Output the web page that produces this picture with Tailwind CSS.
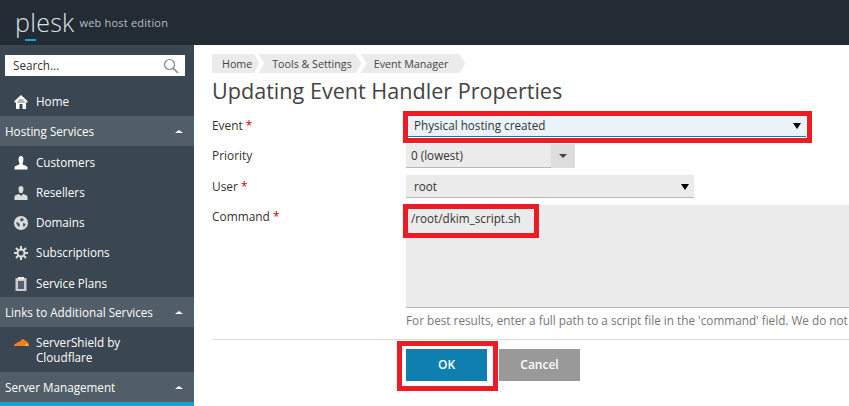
<!DOCTYPE html>
<html lang="en">
<head>
  <meta charset="UTF-8" />
  <meta name="viewport" content="width=device-width, initial-scale=1" />
  <title>Updating Event Handler Properties</title>
  <script src="https://cdn.jsdelivr.net/npm/@tailwindcss/browser@4"></script>
</head>

<body class="relative h-[406px] w-[849px] overflow-hidden bg-white font-['Open_Sans',sans-serif] text-[11.7px] text-[#333]">

  <!-- Header -->
  <header class="flex h-[45px] items-center bg-[#232b35] pl-[15px]">
    <div class="relative text-[25px] font-light leading-none tracking-[0.3px] text-[#dfe2e5]">
      plesk
      <span class="absolute left-[10px] top-[29px] h-[2px] w-[11px] bg-[#12a5d6]"></span>
    </div>
    <span class="ml-[5px] mt-[1px] text-[11px] tracking-[0.2px] text-[#b9bec3]">web host edition</span>
  </header>

  <div class="flex h-[361px]">
    <!-- Sidebar -->
    <aside class="flex w-[194px] shrink-0 flex-col bg-[#3a4651] text-[11.7px] text-white">
      <div class="px-[5px] pt-[10px]">
        <div class="flex h-[21px] w-[180px] items-center justify-between bg-white pl-2 pr-1 text-[#333]">
          <span class="pt-[1px]">Search...</span>
          <svg class="mr-[2px] h-[16px] w-[16px]" viewBox="0 0 16 16" fill="none" stroke="#888" stroke-width="1.2"><circle cx="6.5" cy="6.5" r="5"/><path d="M10 10l5 5" stroke-width="1.6"/></svg>
        </div>
      </div>

      <a class="flex h-[40px] items-center pl-[14px] pt-[12px]">
        <svg class="mr-[8px] h-[14px] w-[14px] shrink-0" viewBox="0 0 14 14"><path d="M7 0L.5 6v1.500H2V14h3.500V9h3v5H12V7.500h1.500V6z" fill="#fff"/><path d="M4.500 5h5M3.500 7h7" stroke="#3a4651" stroke-width=".8"/></svg>
        Home
      </a>

      <div class="flex h-[30px] items-center justify-between bg-[#515d67] pl-[5px] pr-[11px] pt-[2px]">
        <span>Hosting Services</span>
        <span class="mt-[-2px] h-0 w-0 border-x-[4px] border-b-[3px] border-x-transparent border-b-white"></span>
      </div>

      <a class="flex h-[30px] items-center pl-[14px] pt-[3px]">
        <svg class="mr-[8px] h-[14px] w-[14px] shrink-0" viewBox="0 0 14 14" fill="#fff"><path d="M4.500 3.500a2.500 3.500 0 015 0c0 2-1 3-1 4.500 0 1.200 5 1.500 5 3.500v2H.5v-2c0-2 5-2.300 5-3.500 0-1.500-1-2.500-1-4.500z"/></svg>
        Customers
      </a>
      <a class="flex h-[30px] items-center pl-[14px] pt-[4px]">
        <svg class="mr-[8px] h-[14px] w-[14px] shrink-0" viewBox="0 0 14 14" fill="#ddd"><path d="M4.500 3a2.500 3 0 015 0c0 2-1 3-1 4H5.500c0-1-1-2-1-4z"/><path d="M.5 14v-3c0-2 3-2.500 4.500-3l2 2 2-2c1.500.5 4.500 1 4.500 3v3z"/></svg>
        Resellers
      </a>
      <a class="flex h-[30px] items-center pl-[14px] pt-[4px]">
        <svg class="mr-[8px] h-[14px] w-[14px] shrink-0" viewBox="0 0 14 14"><circle cx="7" cy="7" r="7" fill="#ddd"/><path d="M7 2l3 1-1 2-2 .5L6 4zM9 7l3 1-2 3-1-1zM2 6l3 1 1 2-1 2-2-2z" fill="#4a5560"/></svg>
        Domains
      </a>
      <a class="flex h-[31px] items-center pl-[14px] pt-[3px]">
        <svg class="mr-[8px] h-[14px] w-[14px] shrink-0" viewBox="0 0 14 14" fill="none"><circle cx="7" cy="7" r="3.500" stroke="#ddd" stroke-width="2"/><path d="M7 0v3M7 11v3M0 7h3M11 7h3M2 2l2 2M10 10l2 2M12 2l-2 2M4 10l-2 2" stroke="#ddd" stroke-width="2"/></svg>
        Subscriptions
      </a>
      <a class="flex h-[30px] items-center pl-[14px] pt-[3px]">
        <svg class="mr-[8px] h-[14px] w-[14px] shrink-0" viewBox="0 0 14 14"><rect x="1.500" y="1" width="11" height="13" fill="#ccc"/><rect x="4" y="0" width="6" height="2.500" fill="#eee"/><rect x="4" y="4" width="6" height="8" fill="#56616b"/></svg>
        Service Plans
      </a>

      <div class="flex h-[30px] items-center justify-between bg-[#515d67] pl-[5px] pr-[11px] pt-[1px]">
        <span>Links to Additional Services</span>
        <span class="mt-[-1px] h-0 w-0 border-x-[4px] border-b-[3px] border-x-transparent border-b-white"></span>
      </div>

      <a class="flex h-[45px] items-center pl-[14px] leading-[15px]">
        <svg class="mr-[7px] mt-[-15px] h-[8px] w-[15px] shrink-0" viewBox="0 0 15 8"><path d="M0 8c0-1.500 1-2.500 2.500-2.500C3.500 3.500 5 3.500 6 4 6.500 1 10 0 11.500 3 13.500 3 15 5.500 15 8z" fill="#f38020"/><path d="M11 8c0-1.500 1-2.500 2-2.500L15 8z" fill="#fbb040"/></svg>
        <span>ServerShield by<br />Cloudflare</span>
      </a>

      <div class="flex h-[30px] items-center justify-between bg-[#515d67] pl-[5px] pr-[11px] pt-[1px]">
        <span>Server Management</span>
        <span class="mt-[-1px] h-0 w-0 border-x-[4px] border-b-[3px] border-x-transparent border-b-white"></span>
      </div>
      <div class="h-[4px] bg-[#12a5d6]"></div>
    </aside>

    <!-- Main -->
    <main class="min-w-0 flex-1 pl-[18px] pt-[9px]">
      <nav class="flex h-[19px] w-fit items-center text-[10.7px] text-[#444]">
        <span class="flex h-full items-center bg-[#ebebeb] pl-[10px] pr-[7px] pt-[1px] [clip-path:polygon(0_0,calc(100%-5px)_0,100%_50%,calc(100%-5px)_100%,0_100%)]">Home</span>
        <span class="ml-[-1px] flex h-full items-center bg-[#ebebeb] pl-[14px] pr-[10px] pt-[1px] [clip-path:polygon(0_0,calc(100%-6px)_0,100%_50%,calc(100%-6px)_100%,0_100%,6px_50%)]">Tools &amp; Settings</span>
        <span class="ml-[-1px] flex h-full items-center bg-[#ebebeb] pl-[13px] pr-[17px] pt-[1px] [clip-path:polygon(0_0,calc(100%-6px)_0,100%_50%,calc(100%-6px)_100%,0_100%,6px_50%)]">Event Manager</span>
      </nav>

      <h1 class="mt-[2px] h-[32px] text-[21.6px] leading-[32px] text-[#444]">Updating Event Handler Properties</h1>

      <form class="mt-[9px]">
        <div class="flex h-[28px]">
          <label class="w-[194px] shrink-0 pt-[1px] text-[11.9px]">Event <span class="text-[#c00]">*</span></label>
          <div class="ml-[2px] flex h-[21px] w-[398px] items-center justify-between border-b border-[#0e7fae] bg-[#ebf3fa] pl-[6px] pr-[5px]">
            <span>Physical hosting created</span>
            <span class="h-0 w-0 border-x-[4px] border-t-[6px] border-x-transparent border-t-black"></span>
          </div>
        </div>

        <div class="flex h-[31px]">
          <label class="w-[194px] shrink-0 pt-[3px] text-[11.9px]">Priority</label>
          <div class="flex h-[24px] w-[169px]">
            <div class="flex flex-1 items-center border-b border-[#b5b9bc] bg-[#ebebeb] pl-[5px] pt-[1px]">0 (lowest)</div>
            <div class="flex w-[24px] items-center justify-center bg-[#ddd]">
              <span class="h-0 w-0 border-x-[4px] border-t-[4px] border-x-transparent border-t-[#444]"></span>
            </div>
          </div>
        </div>

        <div class="flex h-[30px]">
          <label class="w-[194px] shrink-0 pt-[3px] text-[11.9px]">User <span class="text-[#c00]">*</span></label>
          <div class="flex h-[23px] w-[288px] items-center justify-between border-b border-[#b5b9bc] bg-[#ebebeb] pl-[8px] pr-[5px] pt-[2px]">
            <span>root</span>
            <span class="h-0 w-0 border-x-[4px] border-t-[6px] border-x-transparent border-t-black"></span>
          </div>
        </div>

        <div class="flex">
          <label class="w-[194px] shrink-0 pt-[3px] text-[11.9px]">Command <span class="text-[#c00]">*</span></label>
          <div class="min-w-0 flex-1">
            <div class="h-[103px] border-b border-[#b5b9bc] bg-[#ebebeb] pl-[5px] pt-[5px] text-[11.7px]">/root/dkim_script.sh</div>
            <p class="mt-[4px] whitespace-nowrap text-[11.75px] text-[#777]">For best results, enter a full path to a script file in the 'command' field. We do not</p>
          </div>
        </div>

        <div class="mt-[9px] border-t border-[#ddd] pl-[194px] pt-[9px]">
          <div class="flex gap-[12px]">
            <button type="button" class="h-[32px] w-[81px] bg-[#0e7fae] text-[12px] font-semibold text-white">OK</button>
            <button type="button" class="h-[32px] w-[81px] bg-[#999] text-[12px] font-semibold text-white">Cancel</button>
          </div>
        </div>
      </form>
    </main>
  </div>

  <!-- red annotation boxes -->
  <div class="absolute left-[403px] top-[111px] h-[32px] w-[409px] border-[5px] border-[#ed1c24]"></div>
  <div class="absolute left-[403px] top-[204px] h-[34px] w-[136px] border-[5px] border-[#ed1c24]"></div>
  <div class="absolute left-[397px] top-[341px] h-[50px] w-[101px] border-[5px] border-[#ed1c24]"></div>

</body>
</html>
